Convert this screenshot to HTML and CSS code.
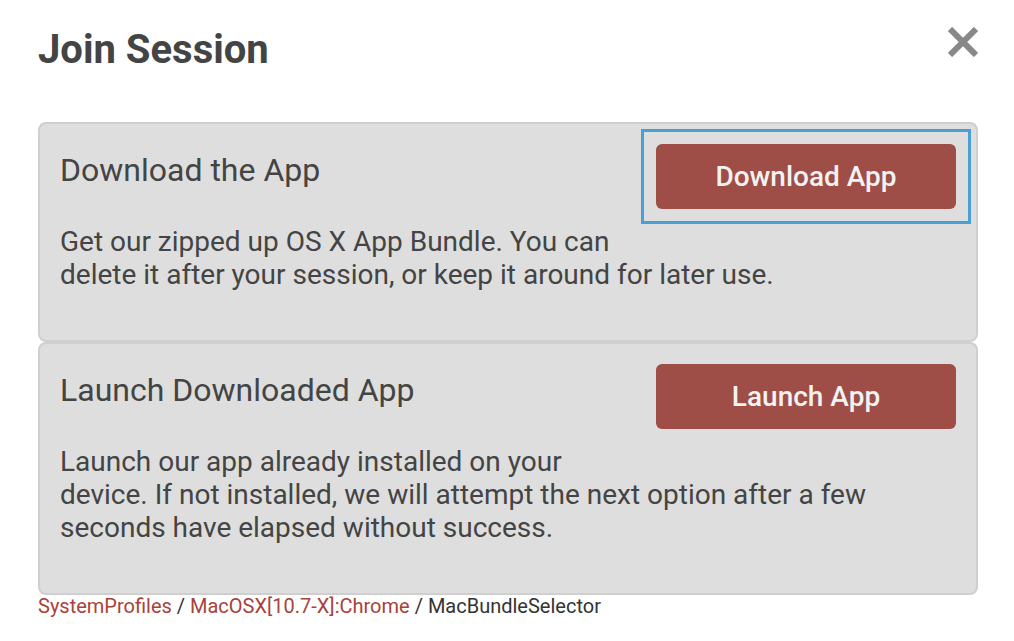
FILE: index.html
```html
<!DOCTYPE html>
<html lang="en">
<head>
<meta charset="utf-8">
<title>Join Session</title>
<link rel="stylesheet" href="styles.css">
</head>
<body>
<div class="modal">
  <header class="modal-header">
    <h1 class="modal-title">Join Session</h1>
    <button class="close-btn" aria-label="Close">
      <svg width="30" height="30" viewBox="0 0 30 30"><path d="M2 2 L28 28 M28 2 L2 28" stroke="#888" stroke-width="6" stroke-linecap="butt" fill="none"/></svg>
    </button>
  </header>
  <section class="panel">
    <div class="btn-wrap focused"><button class="action-btn">Download App</button></div>
    <h2 class="panel-title">Download the App</h2>
    <p class="panel-desc">Get our zipped up OS X App Bundle. You can delete it after your session, or keep it around for later use.</p>
  </section>
  <section class="panel">
    <div class="btn-wrap"><button class="action-btn">Launch App</button></div>
    <h2 class="panel-title">Launch Downloaded App</h2>
    <p class="panel-desc">Launch our app already installed on your device. If not installed, we will attempt the next option after a few seconds have elapsed without success.</p>
  </section>
  <nav class="crumbs">
    <a class="crumb-link" href="#">SystemProfiles</a> / <a class="crumb-link" href="#">MacOSX[10.7-X]:Chrome</a> / <span class="crumb-current">MacBundleSelector</span>
  </nav>
</div>
</body>
</html>
```

FILE: styles.css
```css
html, body {
  margin: 0;
  padding: 0;
  background: #ffffff;
}
body {
  font-family: Roboto, "Liberation Sans", Arial, sans-serif;
  color: #444444;
}
.modal {
  padding: 26px 36px 0 38px;
}
.modal-header {
  display: flex;
  justify-content: space-between;
  align-items: flex-start;
  margin-bottom: 48px;
}
.modal-title {
  margin: 0;
  font-size: 40px;
  line-height: 48px;
  font-weight: 700;
  color: #444444;
}
.close-btn {
  border: 0;
  background: none;
  padding: 0;
  margin: 1px 0 0 0;
  width: 30px;
  height: 30px;
  display: block;
}
.close-btn svg {
  display: block;
}
.panel {
  background: #dedede;
  border: 2px solid #cfcfcf;
  border-radius: 8px;
  padding: 20px;
  margin-bottom: 0;
  display: flow-root;
}
.btn-wrap {
  float: right;
  margin: 0 0 30px 24px;
}
.btn-wrap.focused {
  outline: 3px solid #4a9fd5;
  outline-offset: 12px;
}
.action-btn {
  display: block;
  width: 300px;
  height: 65px;
  border: 0;
  border-radius: 6px;
  background: #9e4e47;
  color: #f2f2f2;
  font-family: Roboto, "Liberation Sans", Arial, sans-serif;
  font-size: 28px;
  font-weight: 500;
  padding: 0;
}
.panel-title {
  margin: 8px 0 0 0;
  font-size: 32px;
  line-height: 36px;
  font-weight: 400;
  color: #444444;
}
.panel-desc {
  margin: 37px 0 29px 0;
  font-size: 28px;
  line-height: 33px;
  color: #444444;
}
.crumbs {
  font-size: 20px;
  line-height: 22px;
  color: #333333;
  padding-top: 0;
}
.crumb-link {
  color: #a8423a;
  text-decoration: none;
}
.crumb-current {
  color: #333333;
}
```
